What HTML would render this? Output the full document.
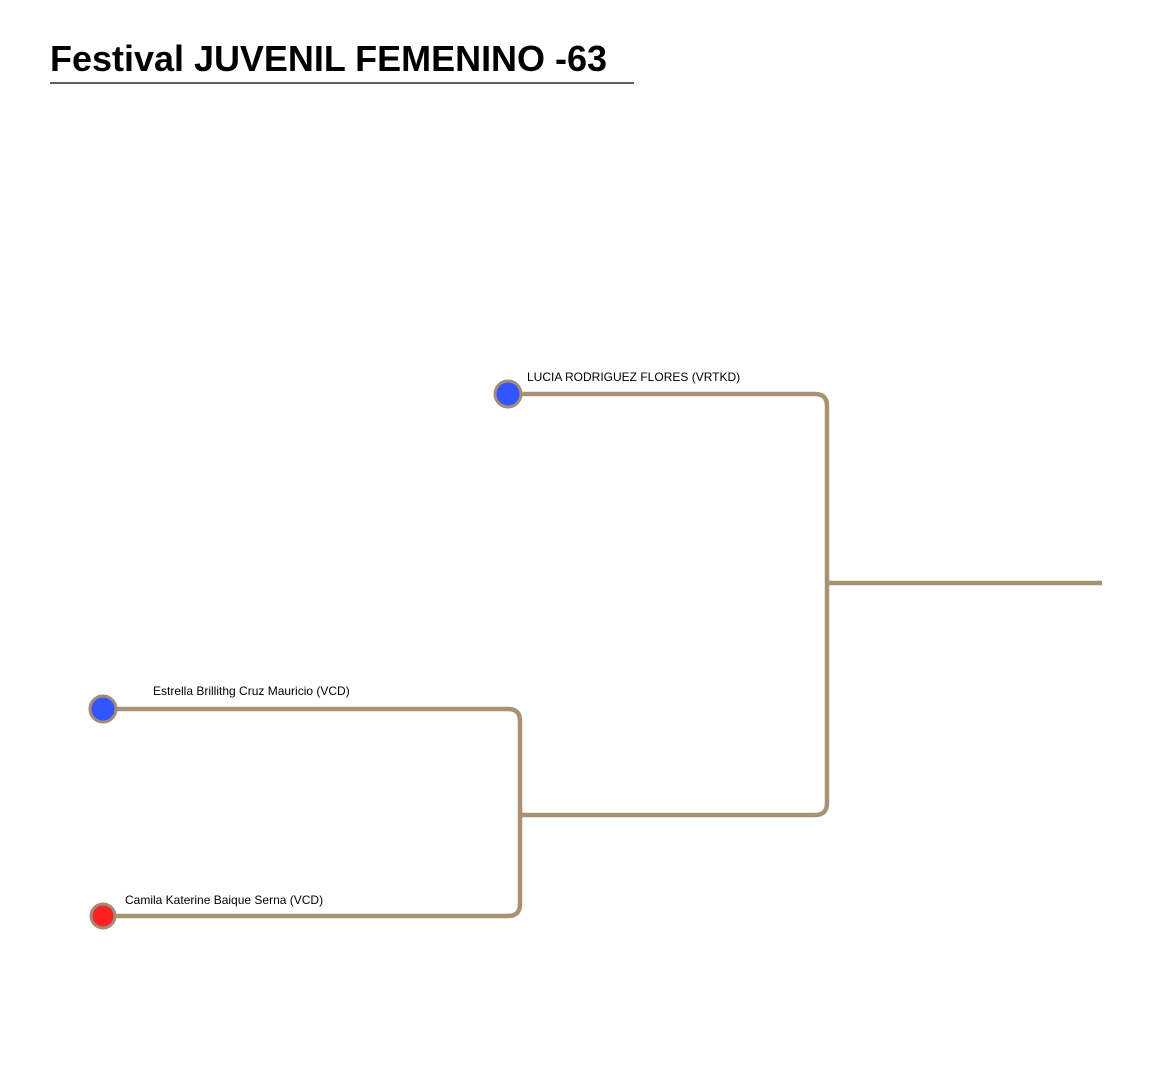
<!DOCTYPE html>
<html><head><meta charset="utf-8"><style>
html,body{margin:0;padding:0;background:#fff;width:1150px;height:1080px;overflow:hidden}
</style></head><body>
<svg width="1150" height="1080" xmlns="http://www.w3.org/2000/svg" style="position:absolute;left:0;top:0">
<text x="50" y="71" font-family="Liberation Sans, sans-serif" font-weight="bold" font-size="36" textLength="557" lengthAdjust="spacingAndGlyphs" fill="#000">Festival JUVENIL FEMENINO -63</text>
<line x1="50" y1="83" x2="634" y2="83" stroke="#000" stroke-width="1.2"/>
<g fill="none" stroke="#a89274" stroke-width="4.5">
<path d="M508 394 H815 Q827 394 827 406 V803 Q827 815 815 815 H520"/>
<line x1="827" y1="583" x2="1102" y2="583"/>
<path d="M103 709 H508 Q520 709 520 721 V904 Q520 916 508 916 H103"/>
</g>
<g stroke="#a08c78" stroke-width="3">
<circle cx="508" cy="394" r="13" fill="#3355ff"/>
<circle cx="103" cy="709" r="13" fill="#3355ff"/>
<circle cx="103" cy="916" r="12" fill="#ff2222"/>
</g>
<g font-family="Liberation Sans, sans-serif" font-size="12" fill="#000">
<text x="527" y="381">LUCIA RODRIGUEZ FLORES (VRTKD)</text>
<text x="153" y="695">Estrella Brillithg Cruz Mauricio (VCD)</text>
<text x="125" y="904">Camila Katerine Baique Serna (VCD)</text>
</g>
</svg>
</body></html>
